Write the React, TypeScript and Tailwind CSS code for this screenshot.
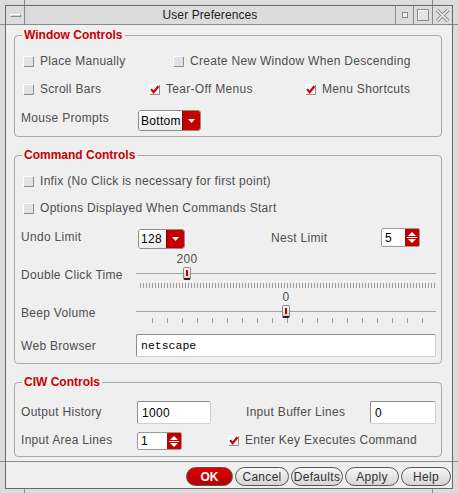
import React from 'react'

const txt = 'text-[12px] leading-[16px] tracking-[0.3px] text-[#4e4e4e] whitespace-nowrap'

const Box = ({checked}: {checked?: boolean}) => (
	<svg width="11" height="11" viewBox="0 0 11 11" className="shrink-0">
		<rect x="0" y="0" width="11" height="11" fill={checked ? '#f6f6f6' : '#e2e2e2'} />
		<path d="M0.5 10.5V0.5H10.5" fill="none" stroke="#ffffff" />
		<path d="M1 10.5H10.5V1" fill="none" stroke="#8c8c8c" />
		{checked && <path d="M2.2 5.2L4.6 8.3L9.4 2.2" fill="none" stroke="#cc0000" strokeWidth="2.2" />}
	</svg>
)

const Check = ({label, checked, className}: {label: string, checked?: boolean, className?: string}) => (
	<div className={`flex items-center gap-[6px] ${className ?? ''}`}>
		<Box checked={checked} />
		<span className={txt}>{label}</span>
	</div>
)

const Combo = ({value, className}: {value: string, className: string}) => (
	<div className={`flex overflow-hidden rounded-[3px] border border-[#8c8c8c] ${className}`}>
		<div className="flex flex-1 items-center bg-linear-to-b from-white to-[#ececec] pl-[2px] text-[12px] tracking-[0.3px] text-black">
			{value}
		</div>
		<div className="flex w-[18px] items-center justify-center border-l border-[#7a0000] bg-[#c20000]">
			<svg width="7" height="4" viewBox="0 0 7 4">
				<path d="M0 0H7L3.5 4Z" fill="#ffffff" />
			</svg>
		</div>
	</div>
)

const Spin = ({value, className}: {value: string, className: string}) => (
	<div className={`flex overflow-hidden rounded-[2px] border border-[#9a9a9a] ${className}`}>
		<div className="flex flex-1 items-center bg-white pl-[3px] text-[12px] tracking-[0.3px] text-black">{value}</div>
		<div className="flex w-[14px] flex-col items-center justify-center gap-[1px] bg-[#c20000]">
			<svg width="8" height="4" viewBox="0 0 8 4">
				<path d="M0 4H8L4 0Z" fill="#ffffff" />
			</svg>
			<div className="h-px w-[10px] bg-white" />
			<svg width="8" height="4" viewBox="0 0 8 4">
				<path d="M0 0H8L4 4Z" fill="#ffffff" />
			</svg>
		</div>
	</div>
)

const Field = ({value, className, mono}: {value: string, className: string, mono?: boolean}) => (
	<div className={`flex items-center rounded-[2px] border border-t-[#8e8e8e] border-l-[#8e8e8e] border-b-[#cfcfcf] border-r-[#cfcfcf] bg-white pl-[4px] text-black ${mono ? "font-['Liberation_Mono',monospace] text-[11.5px]" : 'text-[12px] tracking-[0.3px]'} ${className}`}>
		{value}
	</div>
)

const Thumb = ({left}: {left: number}) => (
	<div
		className="absolute top-0 flex h-[13px] w-[8px] justify-center rounded-[2px] border border-[#8a8a8a] border-b-2 border-b-[#222] bg-linear-to-b from-white to-[#cfcfcf] pt-[2px]"
		style={{left}}
	>
		<div className="h-[6px] w-[2px] bg-[#c00000]" />
	</div>
)

const Slider = ({value, pos, dense}: {value: string, pos: number, dense?: boolean}) => {
	const left = Math.round(pos * 292)
	return (
		<div className="w-[300px]">
			<div className="relative h-[13px]">
				<span className={`absolute top-0 -translate-x-1/2 leading-[13px] ${txt}`} style={{left: left + 4}}>
					{value}
				</span>
			</div>
			<div className="relative mt-[3px] h-[13px] pt-[6px]">
				<div className="h-px bg-[#a4a4a4]" />
				<Thumb left={left} />
			</div>
			{dense
				? <div className="mt-[3px] ml-[4px] h-[5px] w-[295px] bg-[image:repeating-linear-gradient(90deg,#9c9c9c_0_1px,transparent_1px_3px)]" />
				: <div className="ml-[16px] h-[5px] w-[272px] bg-[image:repeating-linear-gradient(90deg,#9c9c9c_0_1px,transparent_1px_15px)]" />}
		</div>
	)
}

const Group = ({title, className, children}: {title: string, className?: string, children: React.ReactNode}) => (
	<fieldset className={`w-[428px] rounded-[4px] border border-[#a8a8a8] pt-[4px] ${className ?? ''}`}>
		<legend className="ml-[7px] px-[2px] text-[12px] font-bold leading-[16px] text-[#c80000]">{title}</legend>
		{children}
	</fieldset>
)

const Btn = ({label, className}: {label: string, className: string}) => (
	<button className={`h-[19px] rounded-full border border-[#555] bg-linear-to-b from-[#f6f6f6] to-[#d6d6d6] text-[12px] tracking-[0.3px] text-[#333] ${className}`}>
		{label}
	</button>
)

const TitleBar = () => (
	<div className="flex h-[19px] shrink-0 border-b border-[#8a8a8a] bg-[#dcdcdc]">
		<div className="flex w-[19px] items-center justify-center border-r border-[#8a8a8a]">
			<div className="h-[3px] w-[11px] border border-t-white border-l-white border-b-[#8a8a8a] border-r-[#8a8a8a] bg-[#d4d4d4]" />
		</div>
		<div className="flex flex-1 items-center justify-center text-[12px] tracking-[0.1px] text-[#1c1c1c]">User Preferences</div>
		<div className="flex w-[18px] items-center justify-center border-l border-[#8a8a8a]">
			<div className="h-[6px] w-[6px] border border-[#8a8a8a] bg-[#f2f2f2]" />
		</div>
		<div className="flex w-[19px] items-center justify-center border-l border-[#8a8a8a]">
			<svg width="12" height="12" viewBox="0 0 12 12">
				<rect x="0.5" y="0.5" width="11" height="11" fill="#e4e4e4" stroke="#8a8a8a" />
				<path d="M1.5 10.5V1.5H10.5" fill="none" stroke="#ffffff" />
			</svg>
		</div>
		<div className="flex w-[20px] items-center justify-center border-l border-[#8a8a8a]">
			<svg width="15" height="15" viewBox="0 0 15 15">
				<path d="M2 2L13 13M13 2L2 13" stroke="#8a8a8a" strokeWidth="3.6" />
				<path d="M2 2L13 13M13 2L2 13" stroke="#f4f4f4" strokeWidth="1.6" />
			</svg>
		</div>
	</div>
)

const App = () => {
	return (
		<div className="relative h-[493px] w-[458px] bg-[#dcdcdc] pt-[5px] pr-[5px] pb-[4px] pl-[5px] font-['Liberation_Sans',Arial,sans-serif]">
			{/* resize notches in the frame */}
			<div className="absolute top-0 left-[24px] h-[5px] w-px bg-[#8a8a8a]" />
			<div className="absolute top-0 left-[432px] h-[5px] w-px bg-[#8a8a8a]" />
			<div className="absolute bottom-0 left-[24px] h-[4px] w-px bg-[#8a8a8a]" />
			<div className="absolute bottom-0 left-[432px] h-[4px] w-px bg-[#8a8a8a]" />
			<div className="absolute top-[24px] left-0 h-px w-[5px] bg-[#8a8a8a]" />
			<div className="absolute top-[24px] right-0 h-px w-[5px] bg-[#8a8a8a]" />
			<div className="absolute top-[461px] left-0 h-px w-[5px] bg-[#8a8a8a]" />
			<div className="absolute top-[461px] right-0 h-px w-[5px] bg-[#8a8a8a]" />

			<div className="flex h-full flex-col overflow-hidden border border-[#6a6a6a] bg-[#efefef]">
				<TitleBar />

				<div className="flex flex-col pl-[8px]">
					<Group title="Window Controls" className="mt-[2px]">
						<div className="flex h-[28px] items-center pl-[8px]">
							<Check label="Place Manually" className="w-[150px]" />
							<Check label="Create New Window When Descending" />
						</div>
						<div className="flex h-[28px] items-center pl-[8px]">
							<Check label="Scroll Bars" className="w-[126px]" />
							<Check label="Tear-Off Menus" checked className="w-[156px]" />
							<Check label="Menu Shortcuts" checked />
						</div>
						<div className="flex h-[33px] items-start pl-[6px]">
							<span className={`mt-[7px] w-[117px] ${txt}`}>Mouse Prompts</span>
							<Combo value="Bottom" className="mt-[7px] h-[21px] w-[63px]" />
						</div>
					</Group>

					<Group title="Command Controls" className="mt-[10px]">
						<div className="flex h-[28px] items-center pl-[8px]">
							<Check label="Infix (No Click is necessary for first point)" />
						</div>
						<div className="flex h-[26px] items-center pl-[8px]">
							<Check label="Options Displayed When Commands Start" />
						</div>
						<div className="flex h-[30px] items-start pl-[6px]">
							<span className={`mt-[8px] w-[117px] ${txt}`}>Undo Limit</span>
							<Combo value="128" className="mt-[8px] h-[20px] w-[47px]" />
							<span className={`mt-[9px] ml-[86px] w-[110px] ${txt}`}>Nest Limit</span>
							<Spin value="5" className="mt-[7px] h-[19px] w-[39px]" />
						</div>
						<div className="flex">
							<span className={`w-[121px] pt-[16px] pl-[6px] ${txt}`}>Double Click Time</span>
							<Slider value="200" pos={0.16} dense />
						</div>
						<div className="mt-[1px] flex">
							<span className={`w-[121px] pt-[16px] pl-[6px] ${txt}`}>Beep Volume</span>
							<Slider value="0" pos={0.5} />
						</div>
						<div className="mt-[11px] mb-[6px] flex items-center">
							<span className={`w-[121px] pl-[6px] ${txt}`}>Web Browser</span>
							<Field value="netscape" mono className="h-[23px] w-[300px]" />
						</div>
					</Group>

					<Group title="CIW Controls" className="mt-[10px]">
						<div className="flex items-start pl-[6px]">
							<span className={`mt-[10px] w-[116px] ${txt}`}>Output History</span>
							<Field value="1000" className="mt-[7px] h-[23px] w-[74px]" />
							<span className={`mt-[10px] ml-[35px] w-[124px] ${txt}`}>Input Buffer Lines</span>
							<Field value="0" className="mt-[7px] h-[23px] w-[66px]" />
						</div>
						<div className="mb-[6px] flex items-start pl-[6px]">
							<span className={`mt-[8px] w-[116px] ${txt}`}>Input Area Lines</span>
							<Spin value="1" className="mt-[8px] h-[18px] w-[45px]" />
							<Check label="Enter Key Executes Command" checked className="mt-[8px] ml-[46px]" />
						</div>
					</Group>
				</div>

				<div className="mt-[4px] h-px bg-[#8c8c8c]" />

				<div className="mt-[5px] flex justify-end gap-[2px] pr-[1px]">
					<button className="h-[19px] w-[47px] rounded-full border border-[#555] bg-linear-to-b from-[#e00000] to-[#b00000] text-[12px] font-bold text-white">OK</button>
					<Btn label="Cancel" className="w-[54px]" />
					<Btn label="Defaults" className="w-[52px]" />
					<Btn label="Apply" className="w-[54px]" />
					<Btn label="Help" className="w-[50px]" />
				</div>
			</div>
		</div>
	)
}

export default App
